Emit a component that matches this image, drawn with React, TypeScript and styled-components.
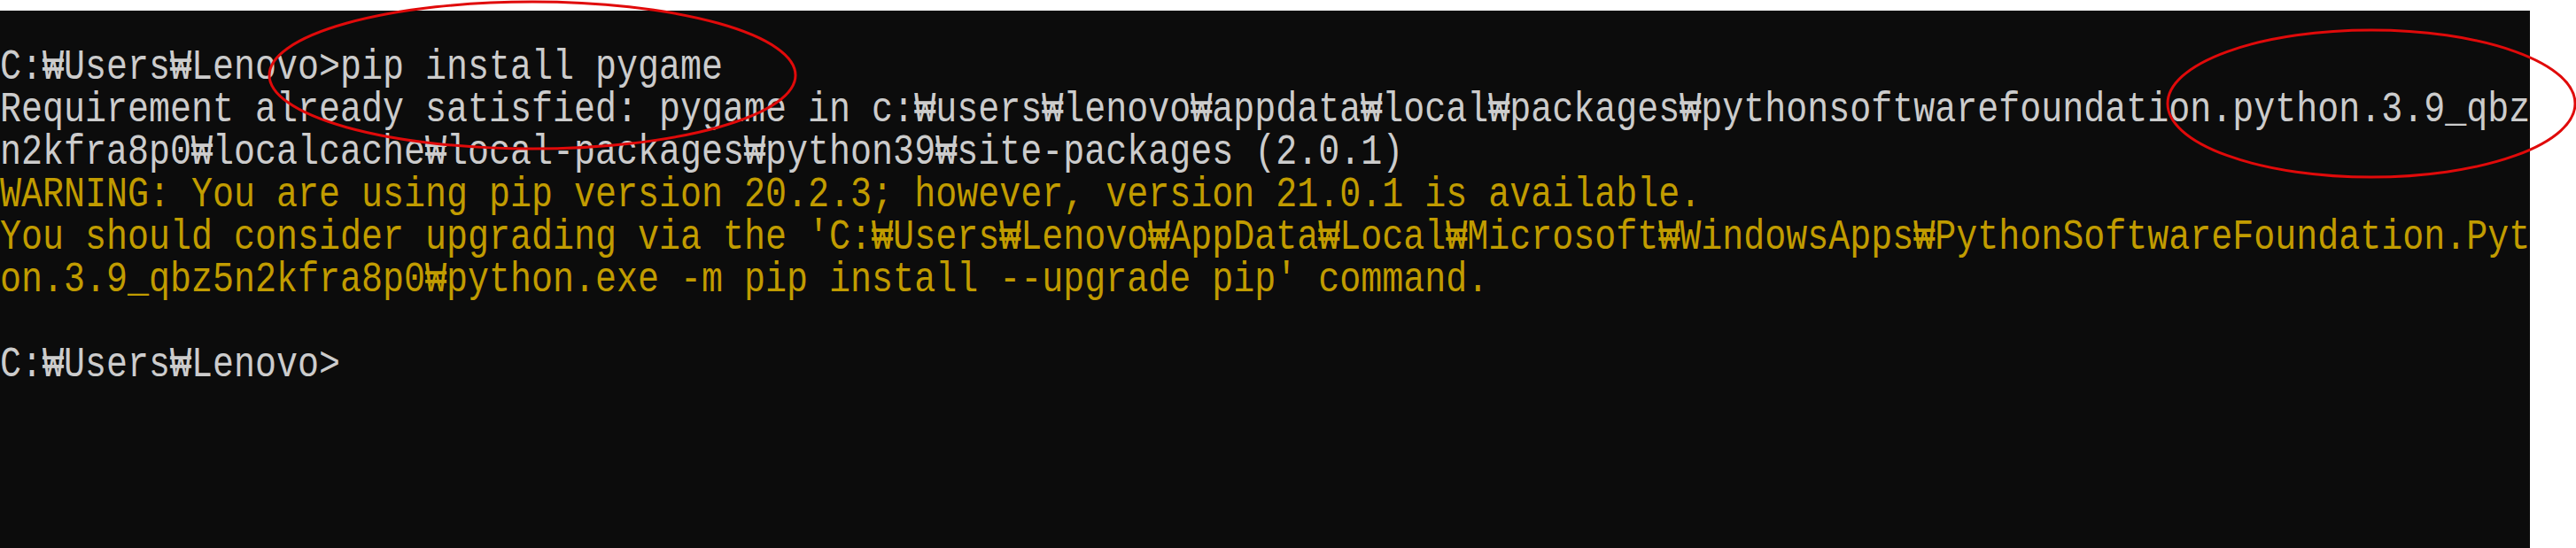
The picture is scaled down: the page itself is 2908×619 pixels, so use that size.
import React from "react";
import styled, { createGlobalStyle } from "styled-components";

const GlobalStyle = createGlobalStyle`
  html, body {
    margin: 0;
    padding: 0;
    background: #ffffff;
    overflow: hidden;
  }
  #root {
    position: relative;
    width: 2908px;
    height: 619px;
  }
`;

const Page = styled.div`
  position: relative;
  width: 2908px;
  height: 619px;
  padding-top: 12px;
  box-sizing: border-box;
  background: #ffffff;
`;

const Console = styled.div`
  width: 2856px;
  height: 607px;
  box-sizing: border-box;
  padding-top: 40px;
  background: #0c0c0c;
  overflow: hidden;
  display: flex;
  flex-direction: column;
`;

const Line = styled.div<{ $tone: "fg" | "warn" }>`
  height: 48px;
  line-height: 48px;
  font-family: "Liberation Mono", "DejaVu Sans Mono", monospace;
  font-size: 48px;
  white-space: pre;
  color: ${(p) => (p.$tone === "warn" ? "#c19c00" : "#cccccc")};
  transform: scaleX(0.8333);
  transform-origin: 0 0;
`;

const Marks = styled.svg`
  position: absolute;
  top: 0;
  left: 0;
  width: 2908px;
  height: 619px;
  pointer-events: none;
`;

const lines: { text: string; tone: "fg" | "warn" }[] = [
  { text: "C:₩Users₩Lenovo>pip install pygame", tone: "fg" },
  {
    text:
      "Requirement already satisfied: pygame in c:₩users₩lenovo₩appdata₩local₩packages₩pythonsoftwarefoundation.python.3.9_qbz5",
    tone: "fg",
  },
  {
    text: "n2kfra8p0₩localcache₩local-packages₩python39₩site-packages (2.0.1)",
    tone: "fg",
  },
  {
    text: "WARNING: You are using pip version 20.2.3; however, version 21.0.1 is available.",
    tone: "warn",
  },
  {
    text:
      "You should consider upgrading via the 'C:₩Users₩Lenovo₩AppData₩Local₩Microsoft₩WindowsApps₩PythonSoftwareFoundation.Pyth",
    tone: "warn",
  },
  {
    text: "on.3.9_qbz5n2kfra8p0₩python.exe -m pip install --upgrade pip' command.",
    tone: "warn",
  },
  { text: "", tone: "fg" },
  { text: "C:₩Users₩Lenovo>", tone: "fg" },
];

export default function App() {
  return (
    <>
      <GlobalStyle />
      <Page>
        <Console>
          {lines.map((l, i) => (
            <Line key={i} $tone={l.tone}>
              {l.text}
            </Line>
          ))}
        </Console>
        <Marks viewBox="0 0 2908 619">
          <ellipse cx="601" cy="85" rx="297" ry="83" fill="none" stroke="#e00a0a" strokeWidth="3" />
          <ellipse cx="2677" cy="117" rx="230" ry="83" fill="none" stroke="#e00a0a" strokeWidth="3" />
        </Marks>
      </Page>
    </>
  );
}
